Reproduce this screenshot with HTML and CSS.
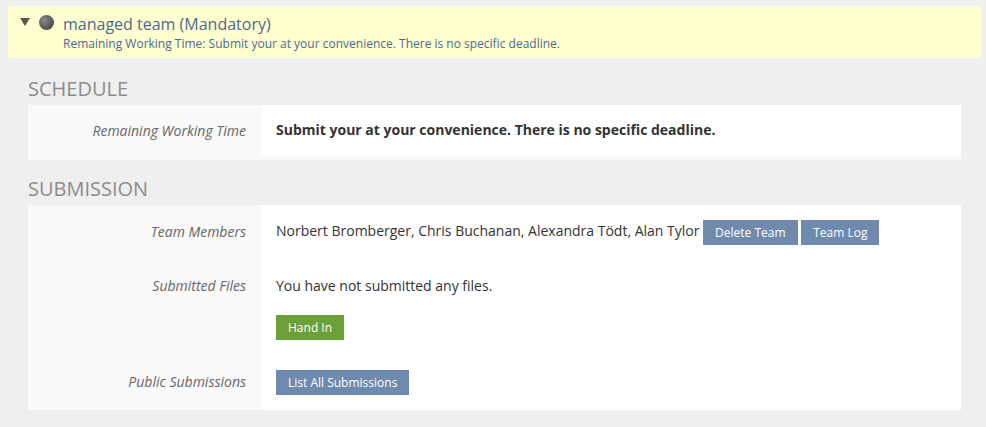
FILE: index.html
```html
<!DOCTYPE html>
<html>
<head lang="en">
    <meta charset="UTF-8">
    <title>managed team</title>
    <link rel="stylesheet" href="styles.css">
</head>
<body>
    <div class="assignment-head">
        <svg class="toggle" width="10" height="8" viewBox="0 0 10 8"><polygon points="0,0 10,0 5,8" fill="#555"/></svg>
        <span class="status-dot"></span>
        <div class="head-text">
            <div class="head-title">managed team (Mandatory)</div>
            <div class="head-sub">Remaining Working Time: Submit your at your convenience. There is no specific deadline.</div>
        </div>
    </div>

    <h2 class="section-title">Schedule</h2>
    <div class="props props-schedule">
        <div class="prop-row">
            <div class="prop-label">Remaining Working Time</div>
            <div class="prop-value"><strong>Submit your at your convenience. There is no specific deadline.</strong></div>
        </div>
    </div>

    <h2 class="section-title">Submission</h2>
    <div class="props">
        <div class="prop-row">
            <div class="prop-label">Team Members</div>
            <div class="prop-value">Norbert Bromberger, Chris Buchanan, Alexandra Tödt, Alan Tylor <a href="#" class="btn">Delete Team</a> <a href="#" class="btn">Team Log</a></div>
        </div>
        <div class="prop-row">
            <div class="prop-label">Submitted Files</div>
            <div class="prop-value">
                <p class="files-note">You have not submitted any files.</p>
                <div class="btn-line"><a href="#" class="btn btn-submit">Hand In</a></div>
            </div>
        </div>
        <div class="prop-row">
            <div class="prop-label">Public Submissions</div>
            <div class="prop-value"><div class="btn-line"><a href="#" class="btn">List All Submissions</a></div></div>
        </div>
    </div>
</body>
</html>
```

FILE: styles.css
```css
*{
    padding: 0;
    margin: 0;
    box-sizing: border-box;
}
body{
    background: #efefef;
    font-family: "Open Sans", "Liberation Sans", sans-serif;
    font-size: 14px;
    color: #333;
    padding: 6px 5px 17px 8px;
}
a{
    text-decoration: none;
}
.assignment-head{
    background: #ffffcf;
    height: 52px;
    padding: 7px 12px 0 12px;
    display: flex;
    align-items: flex-start;
}
.toggle{
    margin-top: 5px;
    flex: none;
}
.status-dot{
    width: 15px;
    height: 15px;
    border-radius: 50%;
    background: radial-gradient(circle at 35% 35%, #8a8a8a, #4a4a4a 75%);
    margin: 2px 9px 0 9px;
    flex: none;
}
.head-title{
    font-size: 16px;
    line-height: 22px;
    color: #4d6a95;
}
.head-sub{
    font-size: 12px;
    line-height: 16px;
    margin-top: 1px;
    color: #4d6a95;
}
.section-title{
    font-size: 20px;
    font-weight: normal;
    text-transform: uppercase;
    color: #8c8c8c;
    line-height: 27px;
    margin: 17px 0 3px 20px;
}
.props{
    background: #f9f9f9;
    margin: 0 20px 0 20px;
}
.props-schedule{
    padding-bottom: 4px;
}
.props-schedule + .section-title{
    margin-top: 15px;
}
.prop-row{
    display: grid;
    grid-template-columns: 233px 1fr;
}
.prop-label{
    font-style: italic;
    color: #666;
    text-align: right;
    padding: 15px 15px 15px 0;
    line-height: 22px;
}
.prop-value{
    background: #fff;
    padding: 15px;
    line-height: 22px;
}
.props .prop-row:first-child .prop-label,
.props .prop-row:last-child .prop-label{
    padding-top: 16px;
}
.props-schedule .prop-label{
    line-height: 20px;
    padding-top: 16px;
}
.props-schedule .prop-value{
    line-height: 20px;
}
.files-note{
    margin-bottom: 18px;
}
.btn-line{
    display: flex;
}
.btn{
    display: inline-block;
    vertical-align: top;
    background: #708aae;
    color: #fff;
    font-size: 12px;
    line-height: 25px;
    height: 25px;
    padding: 0 12px;
}
.btn-submit{
    background: #6b9f38;
}
```
